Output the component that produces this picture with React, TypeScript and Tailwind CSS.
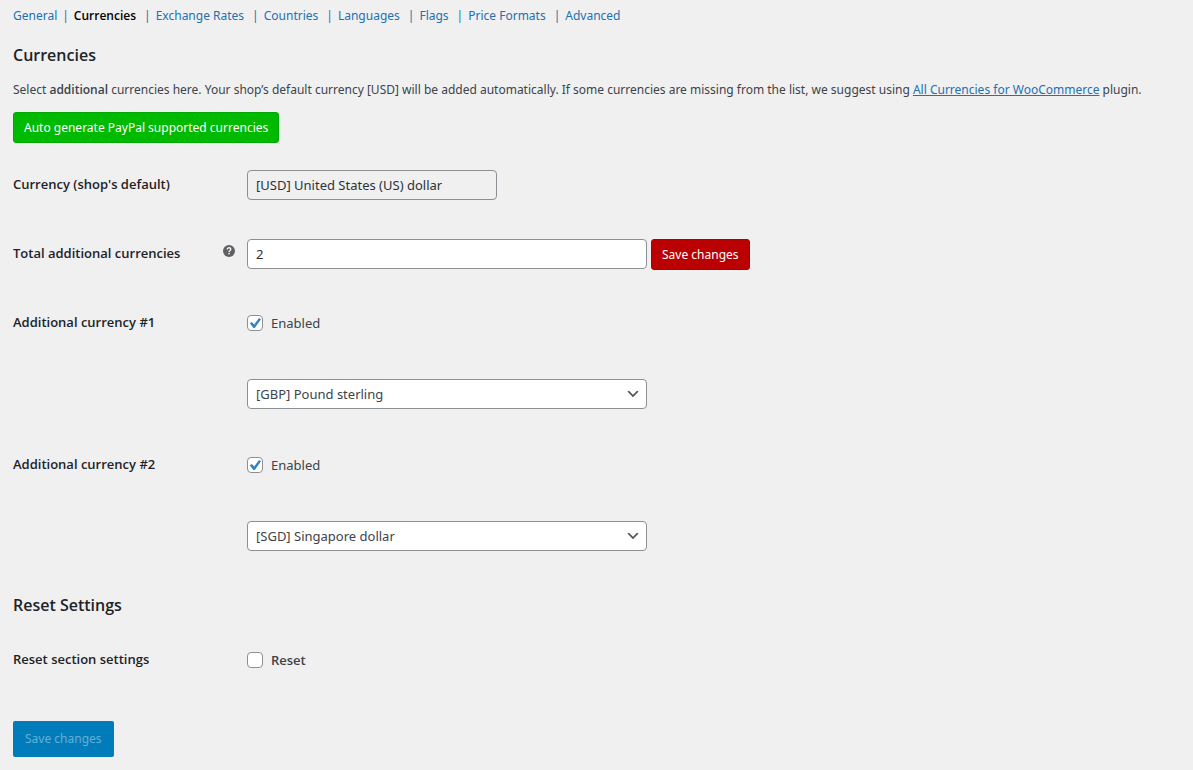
import { useState } from "react";
import type { ReactNode } from "react";

const sections = [
  "General",
  "Currencies",
  "Exchange Rates",
  "Countries",
  "Languages",
  "Flags",
  "Price Formats",
  "Advanced",
];

const selectClass =
  "h-[30px] w-full appearance-none rounded border border-[#8c8f94] bg-white pr-6 pl-2 text-[13px] leading-7 text-[#3c434a]";

function HelpIcon() {
  return (
    <svg viewBox="0 0 12 12" className="size-3" role="img" aria-label="Help">
      <circle cx="6" cy="6" r="6" fill="#5f6063" />
      <path
        d="M4.2 4.5C4.2 3.4 5 2.8 6 2.8s1.8.6 1.8 1.5c0 1.2-1.7 1.2-1.7 2.6"
        fill="none"
        stroke="#f0f0f1"
        strokeWidth="1.4"
      />
      <rect x="5.3" y="7.8" width="1.5" height="1.5" fill="#f0f0f1" />
    </svg>
  );
}

function Row({
  label,
  htmlFor,
  help,
  tall,
  children,
}: {
  label?: string;
  htmlFor?: string;
  help?: boolean;
  tall?: boolean;
  children: ReactNode;
}) {
  return (
    <div className={tall ? "flex min-h-[71px]" : "flex min-h-[69px]"}>
      <div className="flex w-[234px] shrink-0 items-start justify-between pt-5 pr-3 font-['Open_Sans','Noto_Sans',sans-serif] text-[13px] leading-[18px] font-semibold text-[#1d2327]">
        {label && <label htmlFor={htmlFor}>{label}</label>}
        {help && (
          <span className="pt-px">
            <HelpIcon />
          </span>
        )}
      </div>
      <div className="min-w-0 flex-1 pt-[15px]">{children}</div>
    </div>
  );
}

function Check({
  id,
  label,
  initial,
  strong,
}: {
  id: string;
  label: string;
  initial: boolean;
  strong?: boolean;
}) {
  const [checked, setChecked] = useState(initial);
  return (
    <label
      className={
        strong
          ? "inline-flex h-[30px] items-center gap-2 font-['Open_Sans','Noto_Sans',sans-serif] text-[13px] font-semibold"
          : "inline-flex h-[30px] items-center gap-2 text-[13px]"
      }
    >
      <span className="grid size-4">
        <input
          id={id}
          type="checkbox"
          checked={checked}
          onChange={(e) => setChecked(e.target.checked)}
          className="col-start-1 row-start-1 size-4 appearance-none rounded border border-[#8c8f94] bg-white"
        />
        {checked && (
          <svg
            viewBox="0 0 16 16"
            className="pointer-events-none col-start-1 row-start-1 size-4"
            aria-hidden="true"
          >
            <path d="M2.8 8.3 4.8 6.9l2.4 2.6L12 3l2 1.2-6.2 8.9H6.4z" fill="#3582c4" />
          </svg>
        )}
      </span>
      {label}
    </label>
  );
}

function CurrencySelect({ name, value, options }: { name: string; value: string; options: string[] }) {
  return (
    <div className="grid w-full max-w-[400px] items-center">
      <select
        aria-label={name}
        defaultValue={value}
        className={`${selectClass} col-start-1 row-start-1`}
      >
        {options.map((option) => (
          <option key={option}>{option}</option>
        ))}
      </select>
      <svg
        viewBox="0 0 20 20"
        className="pointer-events-none col-start-1 row-start-1 mr-1.5 size-4 justify-self-end"
        aria-hidden="true"
      >
        <path d="m5 6 5 5 5-5 2 1-7 7-7-7z" fill="#50575e" />
      </svg>
    </div>
  );
}

const currencies = ["[GBP] Pound sterling", "[SGD] Singapore dollar"];

export default function App() {
  return (
    <div className="min-h-screen bg-[#f0f0f1] px-[13px] pt-1.5 pb-3 font-['Noto_Sans','Open_Sans',sans-serif] text-[13px] leading-5 text-[#3c434a]">
      <nav aria-label="Sections">
        <ul className="flex flex-wrap text-[12px] text-[#2271b1]">
          {sections.map((section, index) => (
            <li key={section} className="flex">
              <a
                href="#"
                aria-current={section === "Currencies" ? "page" : undefined}
                className={
                  section === "Currencies"
                    ? "font-['Open_Sans','Noto_Sans',sans-serif] font-semibold text-black"
                    : ""
                }
              >
                {section}
              </a>
              {index < sections.length - 1 && (
                <span className={index === 0 ? "px-[5px]" : "pr-[5px] pl-2"}>|</span>
              )}
            </li>
          ))}
        </ul>
      </nav>

      <form onSubmit={(e) => e.preventDefault()}>
        <h2 className="mt-[18px] font-['Open_Sans','Noto_Sans',sans-serif] text-base leading-[22px] font-semibold text-[#1d2327]">
          Currencies
        </h2>
        <p className="mt-3.5 text-[12px]">
          Select{" "}
          <strong className="font-['Open_Sans','Noto_Sans',sans-serif] font-semibold">
            additional
          </strong>{" "}
          currencies here. Your shop’s default currency [USD] will be added automatically. If some
          currencies are missing from the list, we suggest using{" "}
          <a href="#" className="text-[#2271b1] underline">
            All Currencies for WooCommerce
          </a>{" "}
          plugin.
        </p>
        <button
          type="button"
          className="mt-3 h-[31px] rounded-[3px] border border-[#00a900] bg-[#00ba00] px-2.5 text-[12px] text-white"
        >
          Auto generate PayPal supported currencies
        </button>

        <div className="mt-3">
          <Row label="Currency (shop's default)" htmlFor="default-currency">
            <input
              id="default-currency"
              readOnly
              defaultValue="[USD] United States (US) dollar"
              className="h-[30px] w-full max-w-[250px] rounded border border-[#8c8f94] bg-[#f0f0f1] px-2 text-[13px] text-[#2c3338]"
            />
          </Row>
          <Row label="Total additional currencies" htmlFor="total" help>
            <div className="flex gap-1">
              <input
                id="total"
                defaultValue="2"
                className="h-[30px] w-full max-w-[400px] rounded border border-[#8c8f94] bg-white px-2 text-[13px] text-[#2c3338]"
              />
              <button
                type="submit"
                className="h-[31px] shrink-0 rounded-[3px] border border-[#aa0000] bg-[#ba0000] px-2.5 text-[12px] text-white"
              >
                Save changes
              </button>
            </div>
          </Row>
          <Row label="Additional currency #1" htmlFor="enabled-1" tall>
            <Check id="enabled-1" label="Enabled" initial />
          </Row>
          <Row tall>
            <CurrencySelect name="Additional currency #1" value={currencies[0]} options={currencies} />
          </Row>
          <Row label="Additional currency #2" htmlFor="enabled-2" tall>
            <Check id="enabled-2" label="Enabled" initial />
          </Row>
          <Row tall>
            <CurrencySelect name="Additional currency #2" value={currencies[1]} options={currencies} />
          </Row>
        </div>

        <h2 className="mt-[17px] font-['Open_Sans','Noto_Sans',sans-serif] text-base leading-[22px] font-semibold text-[#1d2327]">
          Reset Settings
        </h2>
        <div className="mt-3.5">
          <Row label="Reset section settings" htmlFor="reset">
            <Check id="reset" label="Reset" initial={false} strong />
          </Row>
        </div>

        <button
          type="submit"
          disabled
          className="mt-[22px] h-9 rounded-xs bg-[#007cba] px-3 text-[12px] text-[#66b0d6]"
        >
          Save changes
        </button>
      </form>
    </div>
  );
}
